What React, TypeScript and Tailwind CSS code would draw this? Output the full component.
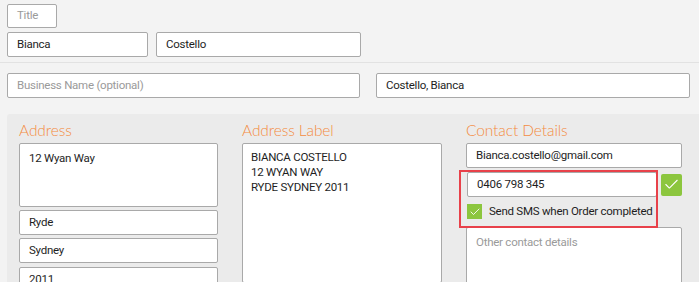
import { Check } from 'lucide-react';

const body = { fontFamily: 'Roboto, "Open Sans", sans-serif' };
const heading = { fontFamily: 'Lato, "Open Sans", sans-serif' };

function Field({ value, placeholder, className = '' }: { value?: string; placeholder?: string; className?: string }) {
  return (
    <div
      className={`flex shrink-0 items-center rounded-[2px] border border-[#a9a9a9] bg-white pl-[9px] text-[11.5px] tracking-[-0.25px] ${className}`}
    >
      {value ? (
        <span className="text-[#1e1e1e]">{value}</span>
      ) : (
        <span className="text-[#9a9a9a]">{placeholder}</span>
      )}
    </div>
  );
}

function Heading({ children }: { children: string }) {
  return (
    <div
      className="h-[29px] pt-[7px] text-[15.5px] font-light leading-[18px] tracking-[-0.1px] text-[#f48c42]"
      style={heading}
    >
      {children}
    </div>
  );
}

export default function App() {
  return (
    <div className="h-[282px] w-[699px] overflow-hidden bg-[#f3f3f3]" style={body}>
      <div className="pl-[7px] pt-[4px]">
        <Field placeholder="Title" className="h-[24px] w-[50px]" />
        <div className="mt-[4px] flex gap-[8px]">
          <Field value="Bianca" className="h-[25px] w-[141px]" />
          <Field value="Costello" className="h-[25px] w-[205px]" />
        </div>
      </div>
      <div className="mt-[5px] h-px w-full bg-[#e2e2e2]" />
      <div className="mt-[10px] flex gap-[16px] pl-[7px]">
        <Field placeholder="Business Name (optional)" className="h-[25px] w-[353px]" />
        <Field value="Costello, Bianca" className="h-[25px] w-[314px]" />
      </div>

      <div className="ml-[7px] mt-[16px] flex h-[200px] gap-[24px] rounded-tl-[3px] bg-[#ebebeb] pl-[12px]">
        <div className="flex w-[199px] flex-col">
          <Heading>Address</Heading>
          <div className="h-[64px] shrink-0 rounded-[2px] border border-[#a9a9a9] bg-white pl-[9px] pt-[6px] text-[11.5px] tracking-[-0.25px] text-[#1e1e1e]">
            12 Wyan Way
          </div>
          <Field value="Ryde" className="mt-[3px] h-[25px]" />
          <Field value="Sydney" className="mt-[3px] h-[25px]" />
          <Field value="2011" className="mt-[4px] h-[25px]" />
        </div>

        <div className="flex w-[200px] flex-col">
          <Heading>Address Label</Heading>
          <div className="h-[140px] rounded-[2px] border border-[#a9a9a9] bg-white pl-[8px] pt-[6px] text-[11.5px] leading-[15px] tracking-[-0.25px] text-[#1e1e1e]">
            <div>BIANCA COSTELLO</div>
            <div>12 WYAN WAY</div>
            <div>RYDE SYDNEY 2011</div>
          </div>
        </div>

        <div className="relative flex w-[216px] flex-col">
          <Heading>Contact Details</Heading>
          <Field value="Bianca.costello@gmail.com" className="h-[25px]" />
          <div className="mt-[4px] flex items-center gap-[4px]">
            <Field value="0406 798 345" className="ml-px h-[25px] w-[190px]" />
            <div className="flex h-[22px] w-[21px] shrink-0 items-center justify-center rounded-[2px] bg-[#8cc63e]">
              <Check size={17} strokeWidth={1.5} className="text-white" />
            </div>
          </div>
          <div className="mt-[6px] flex items-center gap-[7px] pl-px">
            <div className="flex h-[15px] w-[15px] shrink-0 items-center justify-center bg-[#8cc63e]">
              <Check size={12} strokeWidth={1.75} className="text-white" />
            </div>
            <span className="whitespace-nowrap text-[11.5px] tracking-[-0.25px] text-[#1e1e1e]">
              Send SMS when Order completed
            </span>
          </div>
          <div className="mt-[7px] h-[60px] shrink-0 rounded-[2px] border border-[#a9a9a9] bg-white pl-[9px] pt-[6px] text-[11.5px] tracking-[-0.25px] text-[#9a9a9a]">
            Other contact details
          </div>
          <div className="pointer-events-none absolute left-[-7px] top-[56px] h-[58px] w-[199px] border-2 border-[#e8414a]" />
        </div>
      </div>
    </div>
  );
}
